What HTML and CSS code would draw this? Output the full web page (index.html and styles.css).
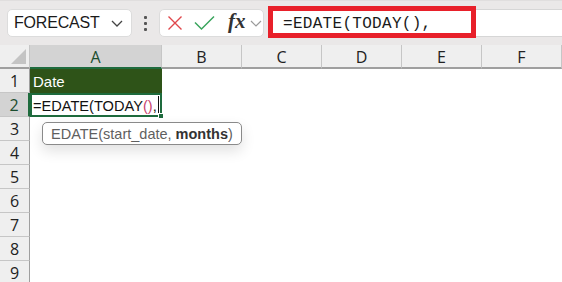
FILE: index.html
```html
<!DOCTYPE html>
<html>
<head>
<meta charset="utf-8">
<link rel="stylesheet" href="styles.css">
</head>
<body>
<div class="app">
  <div class="toolbar">
    <div class="namebox">
      <span class="name">FORECAST</span>
      <svg class="chev" width="12" height="7" viewBox="0 0 12 7"><path d="M1 1 L6 6 L11 1" fill="none" stroke="#444" stroke-width="1.3"/></svg>
    </div>
    <div class="dots"><i></i><i></i><i></i></div>
    <div class="fxbox">
      <svg class="ico x" width="16" height="16" viewBox="0 0 16 16"><path d="M1.5 1.5 L14.5 14.5 M14.5 1.5 L1.5 14.5" stroke="#e0474c" stroke-width="1.4" fill="none"/></svg>
      <svg class="ico" width="21" height="16" viewBox="0 0 21 16"><path d="M1 7.5 L7.5 14 L20 1.5" stroke="#3aa55d" stroke-width="1.5" fill="none"/></svg>
      <span class="fx">fx</span>
      <svg class="chev2" width="12" height="7" viewBox="0 0 12 7"><path d="M1 1 L6 6 L11 1" fill="none" stroke="#9a9a9a" stroke-width="1.2"/></svg>
    </div>
    <div class="formula">
      <span class="ftext">=EDATE(TODAY(),</span>
      <div class="redbox"></div>
    </div>
  </div>
  <div class="sheet">
    <div class="corner"><div class="tri"></div></div>
    <div class="ch sel">A</div>
    <div class="ch">B</div>
    <div class="ch">C</div>
    <div class="ch">D</div>
    <div class="ch">E</div>
    <div class="ch">F</div>

    <div class="rh">1</div>
    <div class="cell date">Date</div>
    <div class="cell"></div><div class="cell"></div><div class="cell"></div><div class="cell"></div><div class="cell"></div>

    <div class="rh sel">2</div>
    <div class="cell active"><span class="entry">=EDATE(TODAY<span class="par">()</span>,<span class="caret"></span></span><span class="handle"></span>
      <div class="tip">EDATE(start_date, <b>months</b>)</div>
    </div>
    <div class="cell"></div><div class="cell"></div><div class="cell"></div><div class="cell"></div><div class="cell"></div>

    <div class="rh">3</div>
    <div class="cell"></div><div class="cell"></div><div class="cell"></div><div class="cell"></div><div class="cell"></div><div class="cell"></div>
    <div class="rh">4</div>
    <div class="cell"></div><div class="cell"></div><div class="cell"></div><div class="cell"></div><div class="cell"></div><div class="cell"></div>
    <div class="rh">5</div>
    <div class="cell"></div><div class="cell"></div><div class="cell"></div><div class="cell"></div><div class="cell"></div><div class="cell"></div>
    <div class="rh">6</div>
    <div class="cell"></div><div class="cell"></div><div class="cell"></div><div class="cell"></div><div class="cell"></div><div class="cell"></div>
    <div class="rh">7</div>
    <div class="cell"></div><div class="cell"></div><div class="cell"></div><div class="cell"></div><div class="cell"></div><div class="cell"></div>
    <div class="rh">8</div>
    <div class="cell"></div><div class="cell"></div><div class="cell"></div><div class="cell"></div><div class="cell"></div><div class="cell"></div>
    <div class="rh">9</div>
    <div class="cell"></div><div class="cell"></div><div class="cell"></div><div class="cell"></div><div class="cell"></div><div class="cell"></div>
  </div>
</div>
</body>
</html>
```

FILE: styles.css
```css
* { box-sizing: border-box; }
html, body { margin: 0; padding: 0; }
body {
  width: 562px;
  height: 282px;
  overflow: hidden;
  background: #fff;
  font-family: "Liberation Sans", Arial, sans-serif;
}
.app { width: 562px; height: 282px; overflow: hidden; }

.toolbar {
  height: 45px;
  background: #eae8e8;
  border-top: 1px solid #e0dede;
  display: flex;
  align-items: center;
  padding-left: 7px;
}
.namebox {
  width: 125px;
  height: 28px;
  background: #fff;
  border: 1px solid #dcdcdc;
  border-radius: 5px;
  display: flex;
  align-items: center;
  padding: 0 8px 0 6px;
  justify-content: space-between;
}
.name { font-size: 16px; color: #1a1a1a; letter-spacing: -0.2px; }
.chev { margin-top: 1px; }
.dots {
  width: 27px;
  display: flex;
  flex-direction: column;
  align-items: center;
  gap: 3px;
}
.dots i { display: block; width: 3px; height: 3px; background: #555; border-radius: 1px; }
.fxbox {
  width: 105px;
  height: 28px;
  background: #fff;
  border: 1px solid #dcdcdc;
  border-radius: 5px;
  display: flex;
  align-items: center;
  padding-left: 7px;
}
.fxbox .ico.x { margin-right: 11px; }
.fx {
  font-family: "Liberation Serif", "Times New Roman", serif;
  font-style: italic;
  font-weight: bold;
  font-size: 21px;
  color: #333;
  margin-left: 13px;
  margin-top: -3px;
}
.chev2 { margin-left: 4px; margin-top: 1px; }
.formula {
  position: relative;
  flex: 1;
  height: 28px;
  margin-left: 4px;
  background: #fff;
  border: 1px solid #d6d6d6;
  border-right: none;
  display: flex;
  align-items: center;
  padding-left: 14px;
}
.ftext {
  font-family: "Liberation Mono", "Courier New", monospace;
  font-size: 16px;
  letter-spacing: 0.3px;
  color: #1a1a1a;
  margin-top: 2px;
}
.redbox {
  position: absolute;
  left: -1px;
  top: -4px;
  width: 208px;
  height: 32px;
  border: 5px solid #e8202a;
}

.sheet {
  display: grid;
  grid-template-columns: 30px 132px 80px 80px 80px 80px 80px;
  grid-template-rows: 24px;
  grid-auto-rows: 24px;
}
.corner {
  background: #efefef;
  border-right: 1px solid #c6c6c6;
  border-bottom: 2px solid #9f9f9f;
  position: relative;
}
.tri {
  position: absolute;
  right: 3px;
  bottom: 3px;
  width: 0;
  height: 0;
  border-left: 15px solid transparent;
  border-bottom: 15px solid #c4c4c4;
}
.ch {
  background: #efefef;
  border-right: 1px solid #c6c6c6;
  border-bottom: 2px solid #9f9f9f;
  font-family: "Open Sans", sans-serif;
  font-size: 16px;
  color: #222;
  display: flex;
  align-items: center;
  justify-content: center;
  padding-top: 1px;
}
.ch.sel {
  background: #d3d3d3;
  border-bottom-color: #1e6b3d;
  color: #1a4d2e;
}
.ch:last-child { border-right: none; }
.rh {
  background: #efefef;
  border-right: 1px solid #9f9f9f;
  border-bottom: 1px solid #c6c6c6;
  font-family: "Open Sans", sans-serif;
  font-size: 16px;
  color: #222;
  display: flex;
  align-items: center;
  justify-content: center;
}
.rh.sel {
  background: #d3d3d3;
  border-right: 2px solid #1e6b3d;
  color: #1a4d2e;
}
.cell {
  background: #fff;
  font-size: 15px;
  color: #111;
  display: flex;
  align-items: center;
  padding-left: 3px;
  white-space: nowrap;
}
.cell.date {
  background: #2e5318;
  color: #fff;
  padding-top: 1px;
}
.cell.active {
  position: relative;
  border: 2px solid #1e6b3d;
  padding-left: 1px;
  padding-top: 1px;
  overflow: visible;
  z-index: 2;
}
.entry {
  display: flex;
  align-items: center;
  flex: none;
  font-size: 14.6px;
}
.par { color: #c8426e; }
.caret {
  display: inline-block;
  width: 1.5px;
  height: 19px;
  background: #111;
  margin-left: 1px;
}
.handle {
  position: absolute;
  right: -4px;
  bottom: -4px;
  width: 6px;
  height: 6px;
  background: #1e6b3d;
  border: 1px solid #fff;
}
.tip {
  position: absolute;
  left: 10px;
  top: 27px;
  width: 200px;
  height: 23px;
  background: #fff;
  border: 1px solid #8a8a8a;
  border-radius: 5px;
  box-shadow: 0 6px 14px rgba(0,0,0,0.12);
  font-size: 14.5px;
  color: #5f5f5f;
  display: flex;
  align-items: center;
  padding-left: 8px;
}
.tip b { color: #333; margin-left: 4px; }
```
